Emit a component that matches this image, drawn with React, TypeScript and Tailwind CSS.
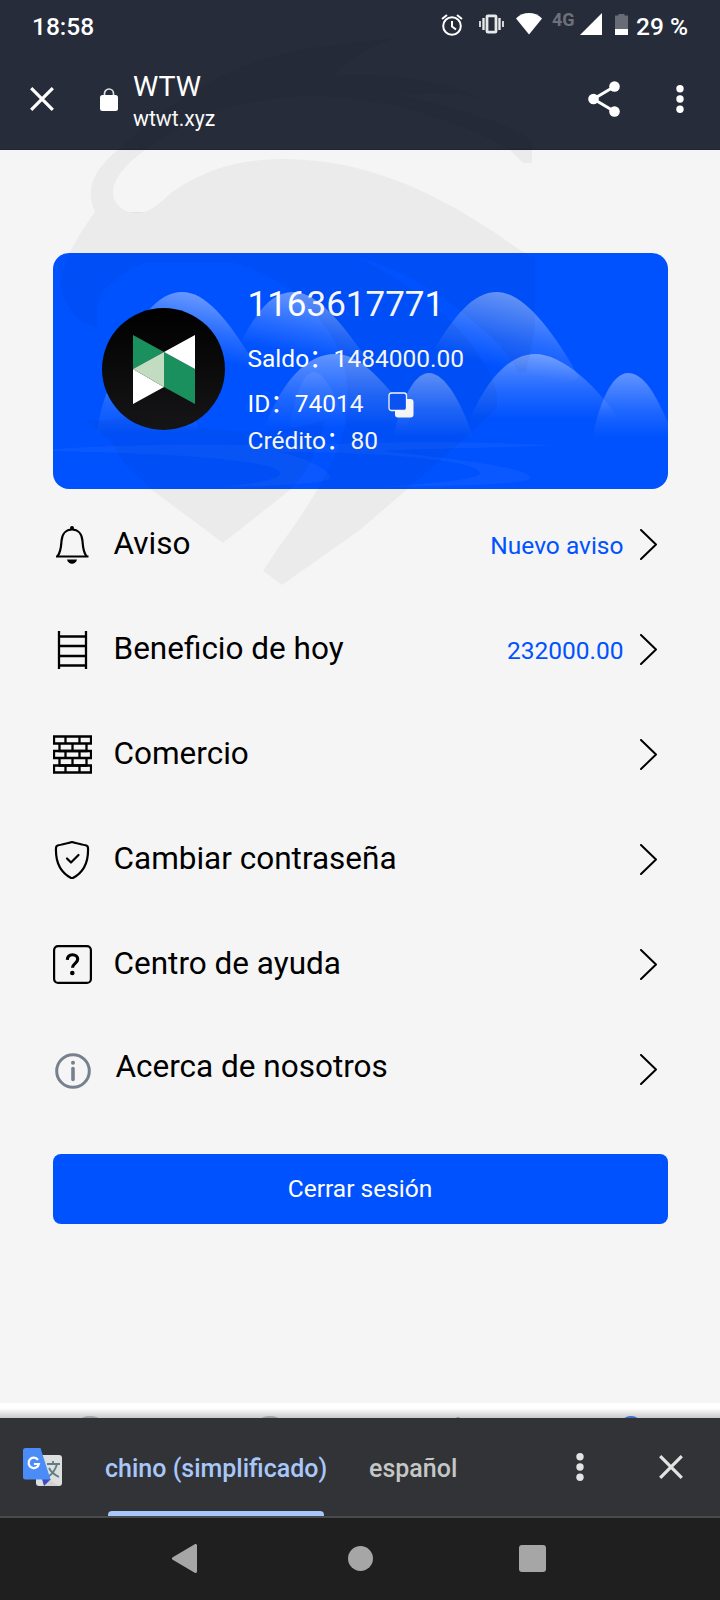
import type { ReactNode } from "react";

type MenuItem = {
  label: string;
  value?: string;
  icon: ReactNode;
  labelClass?: string;
};

const BellIcon = () => (
  <svg className="w-[38px] h-[38px]" viewBox="0 0 38 38" fill="none" stroke="#000" strokeWidth="2.200">
    <circle cx="19" cy="2" r="2" fill="#000" stroke="none" />
    <path d="M4.500 30.500c3.500-5 3.500-9 4-15.500C9 8 13 3.500 19 3.500S29 8 29.500 15c.5 6.500.5 10.500 4 15.500" />
    <path d="M3 30.500h32.500" />
    <path d="M14 33.500h10c-.5 2.500-2.500 4.300-5 4.300s-4.500-1.800-5-4.300z" fill="#000" stroke="none" />
  </svg>
);

const LadderIcon = () => (
  <svg className="w-[39px] h-[38px]" viewBox="0 0 39 38" fill="none" stroke="#000" strokeWidth="2.300">
    <path d="M6 0v38M33 0v38M6 5.500h27M6 15h27M6 25h27M6 34.500h27" />
  </svg>
);

const BricksIcon = () => (
  <svg className="w-[39px] h-[39px]" viewBox="0 0 39 39" fill="none" stroke="#000" strokeWidth="2.300">
    <path d="M1 1.500h37v7H1zM1 16h37v7H1zM1 30.500h37v7H1z" />
    <path d="M6.500 8.500V16h27V8.500M6.500 23v7.500h27V23" />
    <path d="M12.500 1.500v7M26.500 1.500v7M19.500 8.500V16M12.500 16v7M26.500 16v7M19.500 23v7.500M12.500 30.500v7M26.500 30.500v7" />
  </svg>
);

const ShieldIcon = () => (
  <svg className="w-[38px] h-[38px]" viewBox="0 0 38 38" fill="none" stroke="#000" strokeWidth="2.200" strokeLinecap="round" strokeLinejoin="round">
    <path d="M19 1c4 1.200 9 2.200 13.500 3.300 1.700.4 2.500 1.200 2.500 2.700C35.500 19 32 31 19 37.500 6 31 2.500 19 3 7c0-1.500.8-2.300 2.500-2.700C10 3.200 15 2.200 19 1z" />
    <path d="M14 17.500l4 4 7.500-7.500" />
  </svg>
);

const HelpIcon = () => (
  <svg className="w-[39px] h-[39px]" viewBox="0 0 39 39" fill="none" stroke="#000">
    <rect x="1.100" y="1.100" width="36.800" height="36.800" rx="4" strokeWidth="2.200" />
    <path d="M14.300 14.800c.2-3.300 2.300-5.100 5.200-5.100s5.200 1.800 5.200 4.600c0 4-5.200 4.200-5.200 8.500" strokeWidth="3.100" />
    <circle cx="19.300" cy="28" r="2.300" fill="#000" stroke="none" />
  </svg>
);

const InfoIcon = () => (
  <svg className="mt-[2px] ml-[1px] w-[36px] h-[36px]" viewBox="0 0 36 36" fill="none" stroke="#77808f">
    <circle cx="18" cy="18" r="16.300" strokeWidth="3" />
    <path d="M18 15.500v11" strokeWidth="3.600" strokeLinecap="round" />
    <circle cx="18" cy="9.800" r="2" fill="#77808f" stroke="none" />
  </svg>
);

const ChevronIcon = () => (
  <svg className="w-[17px] h-[31px]" viewBox="0 0 17 31" fill="none" stroke="#000" strokeWidth="2" strokeLinecap="round" strokeLinejoin="round">
    <path d="M1 1l15 14.500L1 30" />
  </svg>
);

const CloseIcon = ({ color }: { color: string }) => (
  <svg className="w-6 h-6" viewBox="0 0 24 24" fill="none" stroke={color} strokeWidth="3.200">
    <path d="M1.200 1.200l21.600 21.600M22.800 1.200L1.200 22.800" />
  </svg>
);

const DotsIcon = ({ color }: { color: string }) => (
  <svg className="w-2 h-7" viewBox="0 0 8 28" fill={color}>
    <circle cx="4" cy="3.700" r="3.700" />
    <circle cx="4" cy="14" r="3.700" />
    <circle cx="4" cy="24.300" r="3.700" />
  </svg>
);

const menu: MenuItem[] = [
  { label: "Aviso", value: "Nuevo aviso", icon: <BellIcon /> },
  { label: "Beneficio de hoy", value: "232000.00", icon: <LadderIcon /> },
  { label: "Comercio", icon: <BricksIcon /> },
  { label: "Cambiar contraseña", icon: <ShieldIcon /> },
  { label: "Centro de ayuda", icon: <HelpIcon /> },
  { label: "Acerca de nosotros", icon: <InfoIcon />, labelClass: "pl-[2px] pb-[6px]" },
];

const StatusBar = () => (
  <div className="flex h-12 items-start pl-8 text-white">
    <span className="mt-[3px] w-[409px] text-[24.5px] leading-[48px] font-medium">18:58</span>
    <svg className="mt-[14px] w-[22px] h-[22px]" viewBox="0 0 22 22" fill="none" stroke="#fff" strokeWidth="2">
      <circle cx="11" cy="12" r="8.800" />
      <path d="M11 7v5.500l4 3M1 5l5-4M21 5l-5-4" />
    </svg>
    <svg className="mt-[14px] ml-4 w-[25px] h-[20px]" viewBox="0 0 25 20" fill="none" stroke="#e6e7e9">
      <rect x="8" y="1.800" width="9" height="16.400" rx="1" strokeWidth="2.800" />
      <path d="M4.500 4v12M20.500 4v12" strokeWidth="2.400" />
      <path d="M1 7v6M24 7v6" strokeWidth="1.800" />
    </svg>
    <svg className="mt-[13px] ml-[12px] w-[26px] h-[22px]" viewBox="0 0 26 22" fill="#fff">
      <path d="M0 5.500C7-1.800 19-1.800 26 5.500L13 21.500z" />
    </svg>
    <span className="mt-[10px] ml-[10px] w-[28px] text-[18px] leading-5 font-bold text-[#6c717b]">4G</span>
    <svg className="mt-[13px] w-[22px] h-[22px]" viewBox="0 0 22 22" fill="#fff">
      <path d="M22 0v22H0z" />
    </svg>
    <svg className="mt-[14px] ml-[13px] w-[13px] h-[21px]" viewBox="0 0 13 21">
      <path d="M3.500 0h6v1.500H13V15H0V1.500h3.500z" fill="#686c75" />
      <path d="M0 15h13v6H0z" fill="#fff" />
    </svg>
    <span className="mt-[3px] ml-[8px] text-[24.5px] leading-[48px] font-medium whitespace-nowrap">29 %</span>
  </div>
);

const BrowserBar = () => (
  <div className="flex h-[102px] items-center pl-[30px] text-white">
    <CloseIcon color="#fff" />
    <svg className="ml-[46px] w-[18px] h-[23px]" viewBox="0 0 18 23">
      <path d="M4.500 9V5.500a4.500 4.500 0 019 0V9" fill="none" stroke="#dfe1e4" strokeWidth="1.700" />
      <rect y="7" width="18" height="16" rx="2.500" fill="#fff" />
    </svg>
    <div className="mt-[23px] ml-[15px] w-[455px] self-start">
      <p className="text-[28.5px] leading-8">WTW</p>
      <p className="mt-[4px] text-[21.2px] leading-6">wtwt.xyz</p>
    </div>
    <svg className="w-[32px] h-[36px]" viewBox="0 0 32 36" fill="#fff">
      <path d="M26.500 5.500L5.500 18l21 12.500" fill="none" stroke="#fff" strokeWidth="3" />
      <circle cx="26.500" cy="5.500" r="5.300" />
      <circle cx="5.500" cy="18" r="5.300" />
      <circle cx="26.500" cy="30.500" r="5.300" />
    </svg>
    <div className="ml-14">
      <DotsIcon color="#fff" />
    </div>
  </div>
);

const Hills = () => (
  <svg className="absolute inset-0 w-full h-full" viewBox="0 0 615 236" preserveAspectRatio="none">
    <defs>
      <linearGradient id="tall" x1="0.680" y1="0.050" x2="0.400" y2="0.850">
        <stop offset="0" stopColor="#fff" stopOpacity="0.420" />
        <stop offset="0.500" stopColor="#fff" stopOpacity="0.150" />
        <stop offset="0.850" stopColor="#fff" stopOpacity="0" />
      </linearGradient>
      <linearGradient id="low" x1="0" y1="0" x2="0" y2="1">
        <stop offset="0" stopColor="#fff" stopOpacity="0.380" />
        <stop offset="0.500" stopColor="#fff" stopOpacity="0.120" />
        <stop offset="0.850" stopColor="#fff" stopOpacity="0" />
      </linearGradient>
    </defs>
    <path d="M60 115C85 65 105 39 129 39s48 28 80 85z" fill="url(#tall)" />
    <path d="M175 115C200 62 216 39 240 39s48 28 86 85z" fill="url(#tall)" />
    <path d="M370 115C400 62 420 39 444 39s52 32 82 85l-20 16z" fill="url(#tall)" />
    <path d="M42 196C46 140 68 101 90 101s50 40 60 95z" fill="url(#low)" />
    <path d="M210 178C230 125 255 101 282 101s48 28 76 62l-10 25z" fill="url(#low)" />
    <path d="M232 196C240 150 248 119 261 119s28 38 42 77z" fill="url(#low)" opacity="0.200" />
    <path d="M412 178C430 130 455 101 482 101s62 30 92 77z" fill="url(#low)" />
    <path d="M338 196C346 150 360 120 376 120s34 30 48 76z" fill="url(#low)" />
    <path d="M537 196C545 150 559 120 575 120s28 22 40 50v26z" fill="url(#low)" />
    <path d="M0 196c80-5 180-6 230-2 70-6 180-6 270-2-60 4-130 3-170 6 40 5 145 14 147 27-1 7-90 8-150 9 60-4 100-8 100-14-3-10-60-20-200-21 30 8 48 16 50 26-2 6-60 8-110 9 40-4 60-8 60-14C225 206 100 200 0 198z" fill="#fff" opacity="0.040" />
  </svg>
);

const Avatar = () => (
  <svg className="mt-[55px] ml-[49px] w-[123px] h-[122px]" viewBox="0 0 123 122">
    <defs>
      <linearGradient id="disc" x1="0" y1="0" x2="0" y2="1">
        <stop offset="0" stopColor="#000" />
        <stop offset="1" stopColor="#161618" />
      </linearGradient>
    </defs>
    <ellipse cx="61.500" cy="61" rx="61.500" ry="61" fill="url(#disc)" />
    <path d="M31 27l31 17v35l31 17V61L31 27z" fill="#1b905f" />
    <path d="M31 27v34l31-17z" fill="#1b905f" />
    <path d="M93 27v34L62 44zM31 61v35l31-17z" fill="#fff" />
    <path d="M31 61l31-17v35z" fill="#c1dcc0" />
  </svg>
);

const AccountCard = () => (
  <section className="relative mx-auto mt-[103px] h-[236px] w-[615px] overflow-hidden rounded-2xl bg-[#0052ff] text-white">
    <Hills />
    <div className="relative flex items-start">
      <Avatar />
      <div className="ml-[23px] pt-[31px] text-[24.5px] leading-8">
        <p className="pt-[1px] text-[35px] leading-10">1163617771</p>
        <p className="mt-[18px]">Saldo：1484000.00</p>
        <div className="mt-[13px] flex items-center">
          <span>ID：74014</span>
          <svg className="mt-[2px] ml-[24px] w-[26px] h-[26px]" viewBox="0 0 26 26">
            <rect x="7" y="7" width="18.500" height="18.500" rx="3" fill="#fff" />
            <rect x="1" y="1" width="17.500" height="17.500" rx="2.500" fill="#0d56fb" stroke="#fff" strokeWidth="1.300" />
          </svg>
        </div>
        <p className="mt-[5px]">Crédito：80</p>
      </div>
    </div>
  </section>
);

const MenuRow = ({ item }: { item: MenuItem }) => (
  <li className="flex h-[105px] items-center pr-[11px]">
    <span className="flex w-[39px] justify-center">{item.icon}</span>
    <span className={`ml-[22px] flex-1 text-[31.5px] leading-10 text-black ${item.labelClass ?? "pb-[2px]"}`}>
      {item.label}
    </span>
    {item.value && <span className="mr-4 pt-[3px] text-[24.5px] text-[#0052ff]">{item.value}</span>}
    <ChevronIcon />
  </li>
);

// Top edge of the site's own tab bar, mostly covered by the translate bar
const TabBarPeek = () => (
  <div className="h-[15px] bg-linear-to-b from-white from-35% to-[#cacaca]">
    <svg className="h-[15px] w-full" viewBox="0 0 720 15">
      <ellipse cx="90" cy="17" rx="10" ry="4" fill="#9da4aa" />
      <ellipse cx="270" cy="17" rx="10" ry="4" fill="#9da4aa" />
      <ellipse cx="458" cy="15" rx="2" ry="1" fill="#999" />
      <ellipse cx="631" cy="17" rx="7.500" ry="4" fill="#4470cf" />
    </svg>
  </div>
);

const TranslateBar = () => (
  <div className="flex h-[100px] border-b-2 border-[#4a4a4b] bg-[#323337] pl-[22px]">
    <svg className="mt-[29px] w-[40px] h-[40px]" viewBox="0 0 40 40">
      <rect x="14" y="8" width="26" height="31" rx="3" fill="#dedfdf" />
      <path d="M20 8l8 25 9 6H22z" fill="#c6c8c8" opacity="0.500" />
      <path d="M25 17h13M31 14v3M35 17c-1.500 6-5 10-9 13M27 21c2 4 6 7 10 9" fill="none" stroke="#607d86" strokeWidth="1.800" />
      <path d="M20 32h9l-7 7z" fill="#3b4dbd" />
      <path d="M3.500 1H18.500l10 31.500H3.500A2.500 2.500 0 011 30V3.500A2.500 2.500 0 013.500 1z" fill="#4b8df8" />
      <path d="M16 12.800a5.200 5.200 0 10.900 4.200h-5" fill="none" stroke="#fff" strokeWidth="2.200" />
    </svg>
    <div className="ml-[43px] flex w-[224px] shrink-0 flex-col justify-between">
      <span className="mt-[33px] text-[25px] leading-9 font-medium whitespace-nowrap text-[#a8c7fa]">chino (simplificado)</span>
      <span className="ml-[3px] h-[5px] w-[216px] rounded-t bg-[#a8c7fa]" />
    </div>
    <span className="mt-[33px] ml-10 w-[207px] text-[25px] leading-9 font-medium text-[#c4c7c5]">español</span>
    <div className="flex items-center gap-[75px]">
      <DotsIcon color="#e3e3e3" />
      <CloseIcon color="#e3e3e3" />
    </div>
  </div>
);

const NavBar = () => (
  <nav className="flex h-[82px] items-center bg-[#1f1f1f] pb-[1px] pl-[172px]">
    <svg className="w-[25px] h-[29px]" viewBox="0 0 25 29">
      <path d="M23.500 1.500v26L1.500 14.500z" fill="#a6a6a6" stroke="#a6a6a6" strokeWidth="3" strokeLinejoin="round" />
    </svg>
    <span className="ml-[151px] h-[25px] w-[25px] rounded-full bg-[#a6a6a6]" />
    <span className="ml-[146px] h-[27px] w-[27px] rounded-[3px] bg-[#a6a6a6]" />
  </nav>
);

const Watermark = () => (
  <svg className="pointer-events-none absolute top-0 left-0 h-[600px] w-[600px]" viewBox="0 0 600 600" fill="#000" fillOpacity="0.038">
    {/* horns */}
    <path d="M91 190C92 175 105 160 120 148C170 100 235 60 310 48L395 38C365 50 345 62 333 76C395 72 440 80 480 98C450 92 425 92 400 95C460 108 505 122 532 140V163H523L510 150C440 110 350 90 280 98C220 105 180 125 145 150C125 165 112 180 113 195C115 208 130 216 145 212L95 212C92 205 90 198 91 190Z" />
    {/* upper body */}
    <path d="M95 212H145C160 206 165 196 178 188C210 168 240 159 285 159C360 160 430 185 520 250L535 258V330L526 372H518C512 358 500 346 490 336C450 300 410 272 360 258C400 280 430 300 450 320C475 345 494 375 497 395V408C475 430 430 470 360 530L282 585L263 571L280 545C310 505 335 465 345 425C352 385 345 350 320 320C300 290 260 268 230 262H147C125 270 100 288 97 305V328C75 322 60 300 60 280C66 255 80 232 95 212Z" />
    {/* lower jaw */}
    <path d="M85 420C105 422 115 420 135 415C195 430 265 440 325 420C320 445 310 470 290 490L223 543L152 490L123 462L110 440Z" />
  </svg>
);

const App = () => {
  return (
    <div className="relative flex h-[1600px] w-[720px] flex-col overflow-hidden bg-[#f5f5f5] font-['Roboto','Noto_Sans_CJK_SC',sans-serif]">
      <header className="h-[150px] border-b border-[#20252f] bg-[#262c3a]">
        <StatusBar />
        <BrowserBar />
      </header>
      <main className="flex-1">
        <AccountCard />
        <ul className="mx-auto mt-[3px] w-[615px]">
          {menu.map((item) => (
            <MenuRow key={item.label} item={item} />
          ))}
        </ul>
        <button className="mx-auto mt-8 block h-[70px] w-[615px] rounded-lg bg-[#0052ff] text-[24.5px] text-white">
          Cerrar sesión
        </button>
      </main>
      <TabBarPeek />
      <TranslateBar />
      <NavBar />
      <Watermark />
    </div>
  );
};

export default App;
